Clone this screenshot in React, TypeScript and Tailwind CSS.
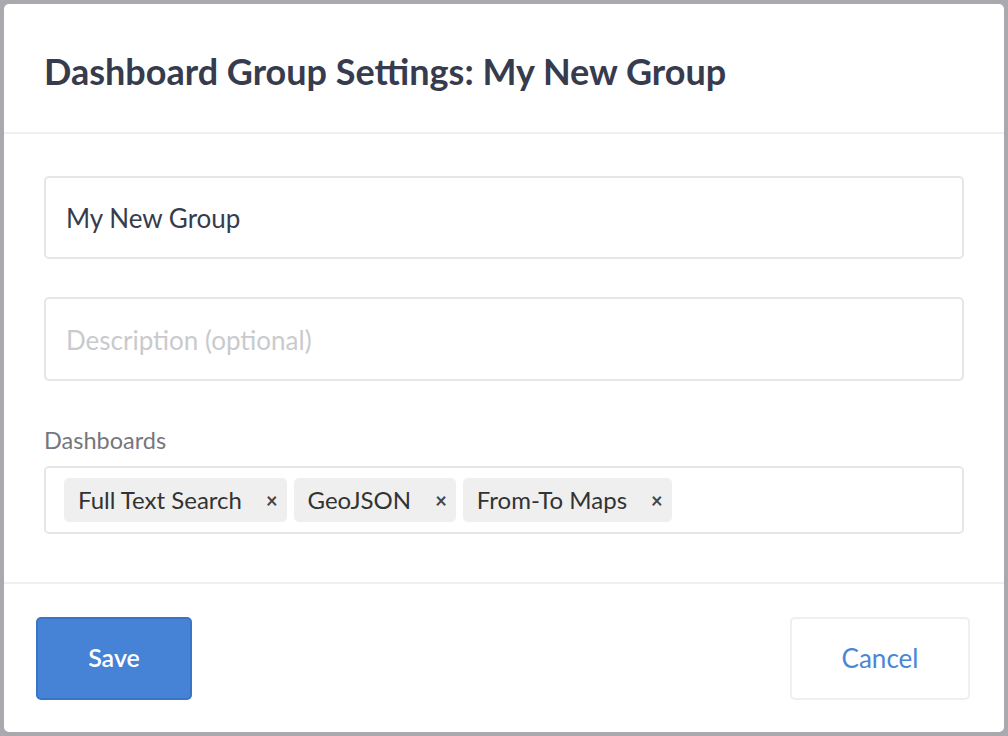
const tags = ["Full Text Search", "GeoJSON", "From-To Maps"]

export default function App() {
	return (
		<div
			className="h-screen w-full bg-[#a9a9ae] p-1"
			style={{ fontFamily: "Lato, 'Noto Sans', sans-serif" }}
		>
			<div className="h-[728px] w-[1000px] bg-white rounded-[5px] flex flex-col">
				<div className="h-[130px] flex items-center px-10 border-b-2 border-[#efefef]">
					<h1 className="text-[36px] font-bold text-[#363b4d] leading-none pt-[6px]">
						Dashboard Group Settings: My New Group
					</h1>
				</div>
				<div className="flex-1 flex flex-col px-10 pt-[42px]">
					<div className="h-[83px] w-[920px] border-2 border-[#e6e6e6] rounded-[5px] flex items-center px-5 pt-[2px]">
						<span className="text-[26px] text-[#363b4d]">My New Group</span>
					</div>
					<div className="mt-[38px] h-[84px] w-[920px] border-2 border-[#e6e6e6] rounded-[5px] flex items-center px-5 pt-[2px]">
						<span className="text-[26px] text-[#c9cacd]">Description (optional)</span>
					</div>
					<div className="mt-[45px] text-[23.5px] text-[#76767c] leading-[28px]">Dashboards</div>
					<div className="mt-[12px] h-[68px] w-[920px] border-2 border-[#e6e6e6] rounded-[5px] flex items-center gap-[7px] px-[18px]">
						{tags.map((t) => (
							<div
								key={t}
								className="h-[44px] bg-[#efefef] rounded-[5px] flex items-center pl-[14px] pr-[9px] gap-[24px]"
							>
								<span className="text-[24px] text-[#333]">{t}</span>
								<span className="text-[20px] text-[#444] font-bold leading-none">×</span>
							</div>
						))}
					</div>
				</div>
				<div className="h-[150px] border-t-2 border-[#efefef] flex items-center justify-between pl-8 pr-[34px]">
					<button className="h-[83px] w-[156px] bg-[#4682d5] border-2 border-[#3b74c6] rounded-[5px] text-white text-[25px] font-semibold">
						Save
					</button>
					<button className="h-[83px] w-[180px] bg-white border-2 border-[#efefef] rounded-[5px] text-[#4a86d6] text-[26px]">
						Cancel
					</button>
				</div>
			</div>
		</div>
	)
}
